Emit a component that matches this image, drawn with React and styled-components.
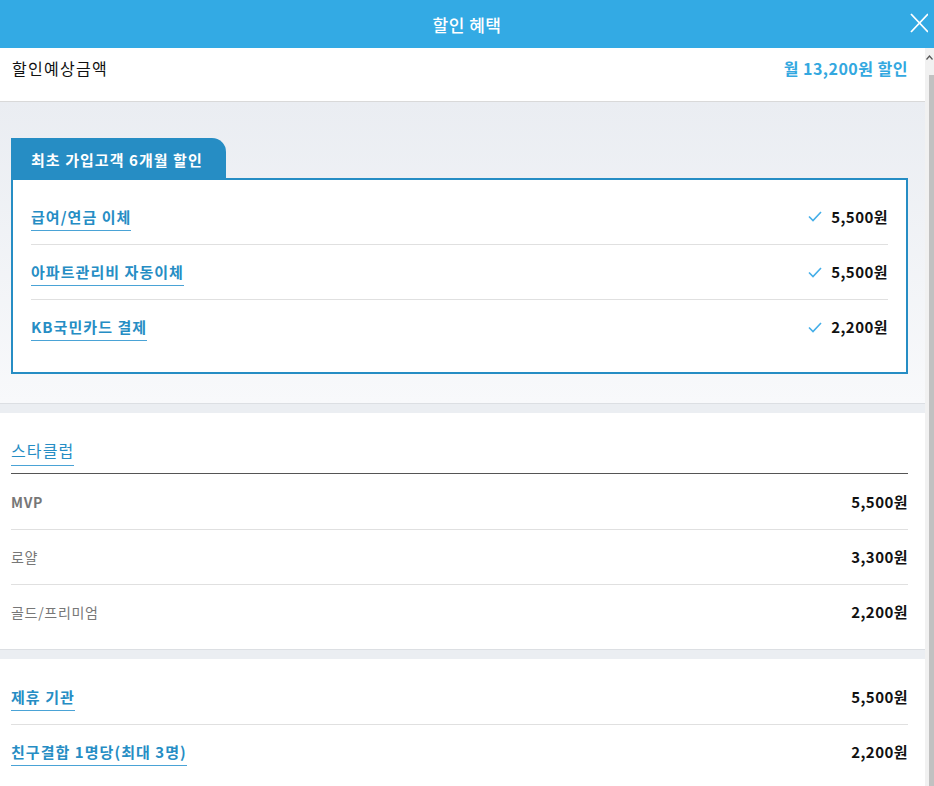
import React from "react"
import styled, { createGlobalStyle } from "styled-components"

const GlobalStyle = createGlobalStyle`
  html, body {
    margin: 0;
    padding: 0;
    background: #fff;
  }
  body {
    font-family: "Noto Sans CJK KR", "Noto Sans", sans-serif;
    color: #111;
  }
`

const Page = styled.div`
  width: 934px;
  height: 786px;
  display: flex;
  flex-direction: column;
  overflow: hidden;
`

const Header = styled.div`
  height: 48px;
  flex: none;
  background: #33aae4;
  display: flex;
  align-items: center;
  justify-content: center;
  position: relative;
  color: #fff;
  font-size: 17px;
  font-weight: 500;
  letter-spacing: 0.03em;
`

const CloseBtn = styled.button`
  position: absolute;
  right: 6px;
  top: 13px;
  width: 20px;
  height: 20px;
  padding: 0;
  border: 0;
  background: none;
  cursor: pointer;
`

const Body = styled.div`
  flex: 1;
  display: flex;
  min-height: 0;
`

const Main = styled.div`
  flex: 1;
  display: flex;
  flex-direction: column;
  & > * {
    flex-shrink: 0;
  }
`

const Scrollbar = styled.div`
  width: 9px;
  flex: none;
  background: #f1f1f1;
  display: flex;
  flex-direction: column;
  align-items: flex-end;
`

const ScrollArrow = styled.div`
  height: 27px;
  width: 9px;
  display: flex;
  justify-content: center;
  padding-top: 7px;
  box-sizing: border-box;
`

const ScrollThumb = styled.div`
  flex: 1;
  width: 5px;
  background: #c1c1c1;
`

const Summary = styled.div`
  height: 54px;
  box-sizing: border-box;
  padding: 9px 17px 0 12px;
  display: flex;
  justify-content: space-between;
  align-items: flex-start;
  border-bottom: 1px solid #d9d9d9;
  font-size: 16px;
  line-height: 22px;
  letter-spacing: 0.08em;
`

const SummaryValue = styled.span`
  color: #33a8e0;
  font-weight: 700;
  letter-spacing: 0.03em;
`

const Promo = styled.div`
  background: linear-gradient(#eaedf2, #f8f9fb);
  padding: 36px 17px 29px 11px;
  border-bottom: 1px solid #dcdfe3;
`

const Tab = styled.div`
  display: inline-block;
  width: 215px;
  height: 41px;
  box-sizing: border-box;
  background: #268dc4;
  color: #fff;
  font-size: 15px;
  font-weight: 700;
  line-height: 20px;
  padding: 12px 0 0 20px;
  letter-spacing: 0.07em;
  border-top-right-radius: 14px;
  vertical-align: bottom;
`

const Box = styled.div`
  border: 2px solid #268dc4;
  background: #fff;
  padding: 9px 18px 18px;
  margin-top: -1px;
`

const Row = styled.div`
  height: 55px;
  box-sizing: border-box;
  display: flex;
  align-items: center;
  justify-content: space-between;
  & + & {
    border-top: 1px solid #e0e0e0;
  }
`

const LinkLabel = styled.span`
  font-size: ${(p) => (p.$light ? "16px" : "15px")};
  font-weight: ${(p) => (p.$light ? 400 : 700)};
  line-height: 20px;
  letter-spacing: 0.07em;
  color: #268dc4;
  padding: 4px 0 3px;
  border-bottom: 1px solid #4aa3d6;
`

const PlainLabel = styled.span`
  font-size: 14px;
  font-weight: ${(p) => (p.$bold ? 700 : 400)};
  line-height: 20px;
  letter-spacing: 0.05em;
  color: #777;
`

const Amount = styled.span`
  display: flex;
  align-items: center;
  gap: 9px;
  font-size: 15px;
  font-weight: 700;
  line-height: 20px;
  letter-spacing: 0.03em;
  color: #111;
`

const Gap = styled.div`
  height: 9px;
  background: #ebeef2;
`

const Section = styled.div`
  background: #fff;
  padding: ${(p) => p.$pad || "10px 17px 10px 11px"};
  border-bottom: ${(p) => (p.$last ? "0" : "1px solid #dcdfe3")};
  flex-grow: ${(p) => (p.$last ? 1 : 0)};
`

const SectionHead = styled.div`
  padding: 25px 0 11px;
  border-bottom: 1px solid #555;
`

const Check = () => (
  <svg width="14" height="11" viewBox="0 0 14 11" fill="none">
    <path d="M1 5.5 L5 9.5 L13 1" stroke="#44aee8" strokeWidth="1.6" />
  </svg>
)

const promoRows = [
  { label: "급여/연금 이체", amount: "5,500원" },
  { label: "아파트관리비 자동이체", amount: "5,500원" },
  { label: "KB국민카드 결제", amount: "2,200원" },
]

const starRows = [
  { label: "MVP", amount: "5,500원", bold: true },
  { label: "로얄", amount: "3,300원" },
  { label: "골드/프리미엄", amount: "2,200원" },
]

const partnerRows = [
  { label: "제휴 기관", amount: "5,500원" },
  { label: "친구결합 1명당(최대 3명)", amount: "2,200원" },
]

export default function App() {
  return (
    <Page>
      <GlobalStyle />
      <Header>
        할인 혜택
        <CloseBtn aria-label="닫기">
          <svg width="20" height="20" viewBox="0 0 20 20">
            <path d="M3 1 L20 19 M20 1 L3 19" stroke="#fff" strokeWidth="1.8" />
          </svg>
        </CloseBtn>
      </Header>
      <Body>
        <Main>
          <Summary>
            <span>할인예상금액</span>
            <SummaryValue>월 13,200원 할인</SummaryValue>
          </Summary>
          <Promo>
            <Tab>최초 가입고객 6개월 할인</Tab>
            <Box>
              {promoRows.map((r) => (
                <Row key={r.label}>
                  <LinkLabel>{r.label}</LinkLabel>
                  <Amount>
                    <Check />
                    {r.amount}
                  </Amount>
                </Row>
              ))}
            </Box>
          </Promo>
          <Gap />
          <Section $pad="0 17px 10px 11px">
            <SectionHead>
              <LinkLabel $light>스타클럽</LinkLabel>
            </SectionHead>
            {starRows.map((r) => (
              <Row key={r.label}>
                <PlainLabel $bold={r.bold}>{r.label}</PlainLabel>
                <Amount>{r.amount}</Amount>
              </Row>
            ))}
          </Section>
          <Gap />
          <Section $last>
            {partnerRows.map((r) => (
              <Row key={r.label}>
                <LinkLabel>{r.label}</LinkLabel>
                <Amount>{r.amount}</Amount>
              </Row>
            ))}
          </Section>
        </Main>
        <Scrollbar>
          <ScrollArrow>
            <svg width="7" height="5" viewBox="0 0 7 5">
              <path d="M0.5 4.5 L3.5 1 L6.5 4.5" stroke="#555" strokeWidth="1.2" fill="none" />
            </svg>
          </ScrollArrow>
          <ScrollThumb />
        </Scrollbar>
      </Body>
    </Page>
  )
}
